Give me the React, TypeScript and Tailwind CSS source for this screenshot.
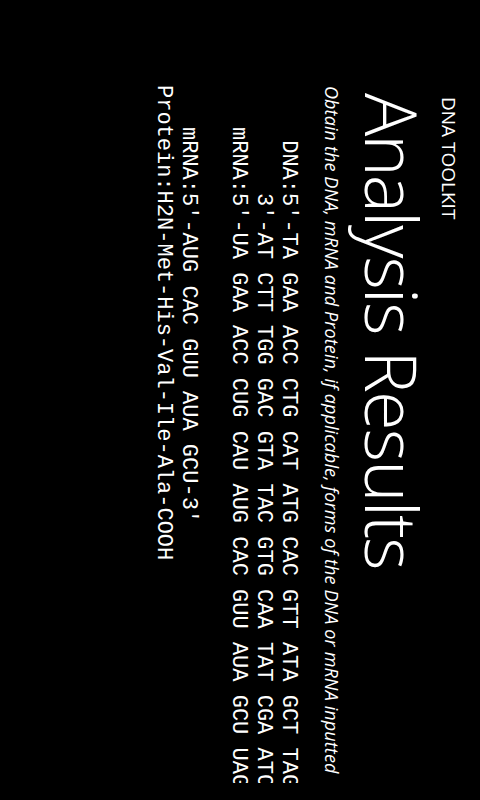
export default function App() {
  const sans = "font-['Open_Sans','Noto_Sans',sans-serif]";
  const mono = "font-['Liberation_Mono','DejaVu_Sans_Mono',monospace]";

  const lines = [
    { text: " DNA:5'-TA GAA ACC CTG CAT ATG CAC GTT ATA GCT TAG", indent: "pl-[43px]" },
    { text: "     3'-AT CTT TGG GAC GTA TAC GTG CAA TAT CGA ATC", indent: "pl-[43px]" },
    { text: "mRNA:5'-UA GAA ACC CUG CAU AUG CAC GUU AUA GCU UAG", indent: "pl-[43px]" },
    { text: " ", indent: "pl-[43px]" },
    { text: "mRNA:5'-AUG CAC GUU AUA GCU-3'", indent: "pl-[43px]" },
    { text: "Protein:H2N-Met-His-Val-Ile-Ala-COOH", indent: "pl-[1px]" },
  ];

  return (
    <div className="w-[480px] h-[800px] bg-black overflow-hidden">
      {/* the phone renders in landscape, so the whole page is turned a quarter clockwise */}
      <div className="w-[800px] h-[480px] origin-top-left rotate-90 translate-x-[480px] bg-black text-white flex">
        <div className="w-[84px] shrink-0" />
        <div className="w-[699px] overflow-hidden flex flex-col">
          <div className={`${sans} mt-[21px] pl-[13px] text-[19px] leading-[20px] uppercase`}>
            DNA Toolkit
          </div>
          <div className={`${sans} mt-[10px] pl-[9px] text-[72px] leading-[72px] font-light tracking-[-2px] whitespace-nowrap`}>
            Analysis Results
          </div>
          <div className={`${sans} mt-[17px] pl-[2px] text-[18px] leading-[17px] italic tracking-[0.12px] whitespace-nowrap`}>
            Obtain the DNA, mRNA and Protein, if applicable, forms of the DNA or mRNA inputted
          </div>
          <div className={`${mono} mt-[22px] text-[22px] leading-[25px]`}>
            {lines.map((line, i) => (
              <div key={i} className={`${line.indent} whitespace-pre`}>
                {line.text}
              </div>
            ))}
          </div>
        </div>
      </div>
    </div>
  );
}
